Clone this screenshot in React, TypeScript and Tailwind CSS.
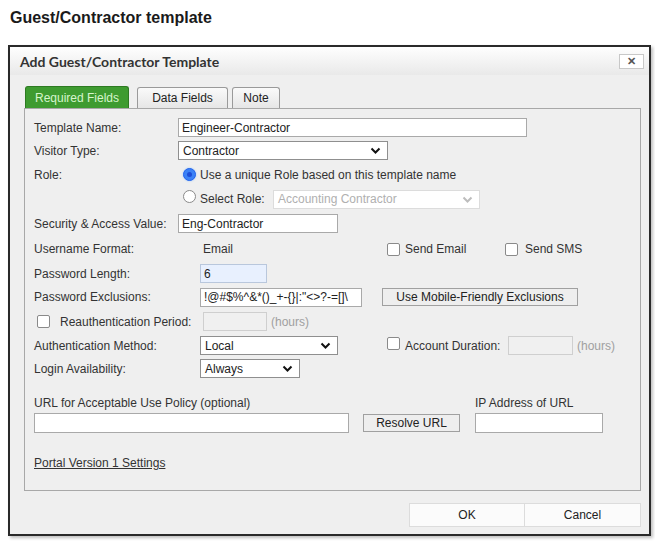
import React from 'react';

function Chevron({ light }: { light?: boolean }) {
  return (
    <svg width="11" height="7" viewBox="0 0 11 7" className="shrink-0">
      <path d="M1.5 1.5l4 4 4-4" fill="none" stroke={light ? '#bdbdbd' : '#111'} strokeWidth="2" />
    </svg>
  );
}

function Checkbox() {
  return <span className="inline-block w-[13px] h-[13px] shrink-0 rounded-[2px] border border-[#8a8a8a] bg-white" />;
}

function Radio({ checked }: { checked?: boolean }) {
  if (checked) {
    return (
      <span className="flex w-[13px] h-[13px] shrink-0 items-center justify-center rounded-full bg-[#3b82f6] border border-[#2563eb] shadow-[0_0_2px_#93c5fd]">
        <span className="w-[5px] h-[5px] rounded-full bg-[#1d4ed8]" />
      </span>
    );
  }
  return <span className="inline-block w-[13px] h-[13px] shrink-0 rounded-full border border-[#8a8a8a] bg-white" />;
}

function TextBox({ value, className }: { value?: string; className: string }) {
  return (
    <div className={`h-[19px] border border-[#a9a9a9] flex items-center px-[3px] overflow-hidden whitespace-nowrap text-[12px] text-[#222] ${className}`}>
      {value}
    </div>
  );
}

function Select({ value, className, disabled }: { value: string; className: string; disabled?: boolean }) {
  return (
    <div
      className={`h-[19px] border flex items-center justify-between pl-[4px] pr-[6px] bg-white text-[12px] ${
        disabled ? 'border-[#dcdcdc] text-[#b0b0b0]' : 'border-[#8f8f8f] text-[#222]'
      } ${className}`}
    >
      <span>{value}</span>
      <Chevron light={disabled} />
    </div>
  );
}

export default function App() {
  return (
    <div className="relative w-[655px] h-[541px] overflow-hidden bg-white font-['Liberation_Sans',Arial,sans-serif] text-[#333]">
      {/* Page title */}
      <div className="h-[45px] pl-[10px] pt-[6px] text-[16px] font-bold text-[#1a1a1a]">Guest/Contractor template</div>

      {/* Dialog */}
      <div className="ml-[8px] w-[643px] h-[491px] border-2 border-[#2a2a2a] bg-[#efefef] flex flex-col shadow-[2px_2px_3px_rgba(0,0,0,0.25)]">
        <div className="h-[28px] shrink-0 flex items-center justify-between pl-[10px] pr-[5px] bg-gradient-to-b from-[#fefefe] to-[#e9e9e9]">
          <span className="font-['Lato',sans-serif] font-bold text-[14px] text-[#333]">Add Guest/Contractor Template</span>
          <span className="flex w-[25px] h-[15px] items-center justify-center border border-[#c8c8c8] bg-white text-[11px] font-bold text-[#555]">✕</span>
        </div>

        {/* Tabs */}
        <div className="mt-[11px] ml-[15px] flex items-end h-[22px] text-[12px]">
          <div className="h-[22px] w-[104px] flex items-center justify-center rounded-t-[3px] bg-[#3e9b30] border border-[#2d7a22] border-b-0 text-[#d6f5cc]">
            Required Fields
          </div>
          <div className="ml-[8px] h-[21px] w-[91px] flex items-center justify-center rounded-t-[3px] bg-gradient-to-b from-[#fafafa] to-[#e6e6e6] border border-[#9a9a9a] border-b-0 text-[#222]">
            Data Fields
          </div>
          <div className="ml-[4px] h-[21px] w-[48px] flex items-center justify-center rounded-t-[3px] bg-gradient-to-b from-[#fafafa] to-[#e6e6e6] border border-[#9a9a9a] border-b-0 text-[#222]">
            Note
          </div>
        </div>

        {/* Panel */}
        <div className="ml-[14px] w-[617px] h-[383px] border border-[#a8a8a8] pl-[9px] pt-[7px] text-[12px] text-[#333] flex flex-col">
          <div className="h-[23px] flex items-center">
            <span className="w-[144px]">Template Name:</span>
            <TextBox value="Engineer-Contractor" className="w-[349px] bg-white" />
          </div>
          <div className="h-[23px] flex items-center">
            <span className="w-[144px]">Visitor Type:</span>
            <Select value="Contractor" className="w-[210px]" />
          </div>
          <div className="h-[25px] flex items-center">
            <span className="w-[144px]">Role:</span>
            <span className="ml-[5px]"><Radio checked /></span>
            <span className="ml-[4px]">Use a unique Role based on this template name</span>
          </div>
          <div className="h-[24px] flex items-center">
            <span className="w-[144px]" />
            <span className="ml-[5px]"><Radio /></span>
            <span className="ml-[4px] w-[73px]">Select Role:</span>
            <Select value="Accounting Contractor" className="w-[207px]" disabled />
          </div>
          <div className="h-[25px] flex items-center">
            <span className="w-[144px]">Security &amp; Access Value:</span>
            <TextBox value="Eng-Contractor" className="w-[160px] bg-white" />
          </div>
          <div className="h-[26px] flex items-center">
            <span className="w-[166px]">Username Format:</span>
            <span className="w-[187px] pl-[3px]">Email</span>
            <div className="w-[118px] flex items-center">
              <Checkbox />
              <span className="ml-[5px]">Send Email</span>
            </div>
            <Checkbox />
            <span className="ml-[7px]">Send SMS</span>
          </div>
          <div className="h-[23px] flex items-center">
            <span className="w-[166px]">Password Length:</span>
            <TextBox value="6" className="w-[67px] bg-[#e8f0fe] border-[#b9c7dc]" />
          </div>
          <div className="h-[24px] flex items-center">
            <span className="w-[166px]">Password Exclusions:</span>
            <TextBox value={'!@#$%^&*()_+-{}|:"<>?-=[]\\'} className="w-[162px] bg-white" />
            <span className="ml-[20px] w-[196px] h-[18px] flex items-center justify-center border border-[#a0a0a0] bg-[#eeeeee] text-[#222]">
              Use Mobile-Friendly Exclusions
            </span>
          </div>
          <div className="h-[25px] flex items-center">
            <div className="w-[166px] flex items-center pl-[3px]">
              <Checkbox />
              <span className="ml-[10px]">Reauthentication Period:</span>
            </div>
            <TextBox className="ml-[3px] w-[64px] bg-[#f0f0f0] border-[#cfcfcf]" />
            <span className="ml-[4px] text-[#a0a0a0]">(hours)</span>
          </div>
          <div className="h-[23px] flex items-center">
            <span className="w-[166px]">Authentication Method:</span>
            <Select value="Local" className="w-[138px]" />
            <span className="ml-[49px]"><Checkbox /></span>
            <span className="ml-[5px] w-[103px]">Account Duration:</span>
            <TextBox className="w-[65px] bg-[#f0f0f0] border-[#cfcfcf]" />
            <span className="ml-[4px] text-[#a0a0a0]">(hours)</span>
          </div>
          <div className="h-[23px] flex items-center">
            <span className="w-[166px]">Login Availability:</span>
            <Select value="Always" className="w-[100px]" />
          </div>

          <div className="mt-[16px] h-[14px] flex items-center">
            <span className="w-[441px]">URL for Acceptable Use Policy (optional)</span>
            <span>IP Address of URL</span>
          </div>
          <div className="mt-[3px] h-[20px] flex items-center">
            <TextBox className="w-[315px] h-[20px] bg-white" />
            <span className="ml-[14px] w-[97px] h-[18px] flex items-center justify-center border border-[#a0a0a0] bg-[#eeeeee] text-[#222]">
              Resolve URL
            </span>
            <TextBox className="ml-[15px] w-[128px] h-[20px] bg-white" />
          </div>
          <div className="mt-[23px] h-[14px] flex items-center">
            <span className="underline text-[#333]">Portal Version 1 Settings</span>
          </div>
        </div>

        {/* Footer */}
        <div className="mt-[12px] mr-[8px] flex justify-end text-[12px] text-[#222]">
          <span className="w-[116px] h-[24px] flex items-center justify-center border border-[#dcdcdc] bg-[#fbfbfb]">OK</span>
          <span className="w-[116px] h-[24px] flex items-center justify-center border border-l-0 border-[#dcdcdc] bg-[#fbfbfb]">Cancel</span>
        </div>
      </div>
    </div>
  );
}
